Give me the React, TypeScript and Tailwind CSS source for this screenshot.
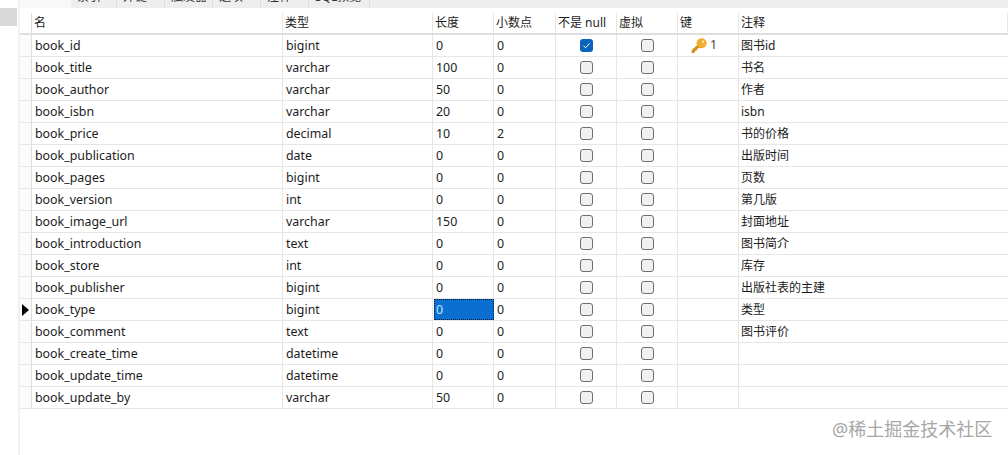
const rows = [
  { name: "book_id", type: "bigint", len: "0", dec: "0", notNull: true, keyNo: "1", note: "图书id" },
  { name: "book_title", type: "varchar", len: "100", dec: "0", note: "书名" },
  { name: "book_author", type: "varchar", len: "50", dec: "0", note: "作者" },
  { name: "book_isbn", type: "varchar", len: "20", dec: "0", note: "isbn" },
  { name: "book_price", type: "decimal", len: "10", dec: "2", note: "书的价格" },
  { name: "book_publication", type: "date", len: "0", dec: "0", note: "出版时间" },
  { name: "book_pages", type: "bigint", len: "0", dec: "0", note: "页数" },
  { name: "book_version", type: "int", len: "0", dec: "0", note: "第几版" },
  { name: "book_image_url", type: "varchar", len: "150", dec: "0", note: "封面地址" },
  { name: "book_introduction", type: "text", len: "0", dec: "0", note: "图书简介" },
  { name: "book_store", type: "int", len: "0", dec: "0", note: "库存" },
  { name: "book_publisher", type: "bigint", len: "0", dec: "0", note: "出版社表的主建" },
  { name: "book_type", type: "bigint", len: "0", dec: "0", note: "类型", current: true },
  { name: "book_comment", type: "text", len: "0", dec: "0", note: "图书评价" },
  { name: "book_create_time", type: "datetime", len: "0", dec: "0", note: "" },
  { name: "book_update_time", type: "datetime", len: "0", dec: "0", note: "" },
  { name: "book_update_by", type: "varchar", len: "50", dec: "0", note: "" },
];

const tabs = [
  { label: "索引", w: "w-[46px]" },
  { label: "外键", w: "w-[48px]" },
  { label: "触发器", w: "w-[48px]" },
  { label: "选项", w: "w-[48px]" },
  { label: "注释", w: "w-[48px]" },
  { label: "SQL预览", w: "w-[61px]" },
];

const headers = [
  { label: "名", w: "w-[251px]" },
  { label: "类型", w: "w-[150px]" },
  { label: "长度", w: "w-[61px]" },
  { label: "小数点", w: "w-[62px]" },
  { label: "不是 null", w: "w-[61px]" },
  { label: "虚拟", w: "w-[61px]" },
  { label: "键", w: "w-[61px]" },
  { label: "注释", w: "flex-1" },
];

const Check = ({ on }: { on?: boolean }) => (
  <span
    className={
      on
        ? "flex h-[13px] w-[13px] items-center justify-center rounded-[3px] bg-[#0a64bd]"
        : "h-[13px] w-[13px] rounded-[3px] border border-[#6e6e6e] bg-[#f1f1f1]"
    }
  >
    {on && (
      <svg width="9" height="9" viewBox="0 0 9 9" fill="none" stroke="#ffffff" strokeWidth="1">
        <path d="M1.5 4.8 L3.6 6.8 L7.6 2.4" />
      </svg>
    )}
  </span>
);

const KeyIcon = () => (
  <svg width="16" height="16" viewBox="0 0 16 16" className="shrink-0">
    <path d="M7.8 5.5 L0.8 12 L0.6 15 L3.6 15 L4.2 13 L5.8 12.6 L6.2 10.8 L10.5 9.5 Z" fill="#d4911f" />
    <circle cx="10.6" cy="5.3" r="5" fill="#f0ae2c" />
    <circle cx="12" cy="3.8" r="1.2" fill="#fbe6a8" />
  </svg>
);

const cell = "flex h-full shrink-0 items-center border-r border-[#e6e6e6] pl-[3px]";
const textCell = `${cell} pt-[2px]`;

export default function App() {
  return (
    <div
      className="relative flex h-[455px] w-[1008px] overflow-hidden bg-white text-[12.4px] text-[#1c1c1c]"
      style={{ fontFamily: '"Noto Sans", "Noto Sans CJK SC", sans-serif' }}
    >
      {/* left gutter */}
      <div className="w-[20px] shrink-0 border-r-2 border-[#f1f1f1] pt-2">
        <div className="h-[18px] w-[17px] bg-[#d9d9d9]" />
      </div>

      <div className="flex min-w-0 flex-1 flex-col">
        {/* tab strip, cut off by the top of the picture */}
        <div className="flex h-2 shrink-0 overflow-hidden bg-[#eeeeee]">
          <div className="h-full w-[51px] bg-[#f8f8f8]" />
          {tabs.map((t) => (
            <div key={t.label} className={`${t.w} h-full border-r border-[#dddddd] pl-[6px]`}>
              <div className="-mt-[12px] whitespace-nowrap text-[12px] leading-[18px] text-[#333333]">{t.label}</div>
            </div>
          ))}
        </div>

        {/* header */}
        <div className="flex h-[27px] shrink-0 border-b-2 border-[#dedede] pt-[5px] text-[12px]">
          <div className="h-full w-[12px] shrink-0 border-r border-[#dedede]" />
          {headers.map((h) => (
            <div key={h.label} className={`${h.w} flex h-full shrink-0 items-center border-r border-[#e6e6e6] pl-[2px]`}>
              {h.label}
            </div>
          ))}
        </div>

        {/* rows */}
        {rows.map((r) => (
          <div key={r.name} className="flex h-[22px] shrink-0 border-b border-[#e6e6e6]">
            <div className="flex h-full w-[12px] shrink-0 items-center justify-center border-r border-[#dedede] bg-[#fbfbfb]">
              {r.current && <span className="h-0 w-0 border-y-[6px] border-l-[7px] border-y-transparent border-l-black" />}
            </div>
            <div className={`${textCell} w-[251px]`}>{r.name}</div>
            <div className={`${textCell} w-[150px]`}>{r.type}</div>
            {r.current ? (
              <div className="ml-[1px] flex h-full w-[60px] shrink-0 items-center border border-dotted border-[#0b1f33] bg-[#0a6fd1] pl-[1px] pt-[1px] text-[#c4e4ff]">
                {r.len}
              </div>
            ) : (
              <div className={`${textCell} w-[61px]`}>{r.len}</div>
            )}
            <div className={`${textCell} w-[62px]`}>{r.dec}</div>
            <div className={`${cell} w-[61px] justify-center pl-0 pr-[2px]`}>
              <Check on={r.notNull} />
            </div>
            <div className={`${cell} w-[61px] justify-center pl-0 pr-[2px]`}>
              <Check />
            </div>
            <div className={`${cell} w-[61px] gap-[3px] pl-[13px] text-[#444444]`}>
              {r.keyNo && (
                <>
                  <KeyIcon />
                  <span>{r.keyNo}</span>
                </>
              )}
            </div>
            <div className="flex h-full flex-1 items-center pl-[2px] text-[12px]">{r.note}</div>
          </div>
        ))}
      </div>

      {/* watermark */}
      <div className="absolute left-[832px] top-[418px] text-[18px] leading-[22px] text-[#a6a6a6] [text-shadow:0_0_1px_#ffffff]">
        @稀土掘金技术社区
      </div>
    </div>
  );
}
